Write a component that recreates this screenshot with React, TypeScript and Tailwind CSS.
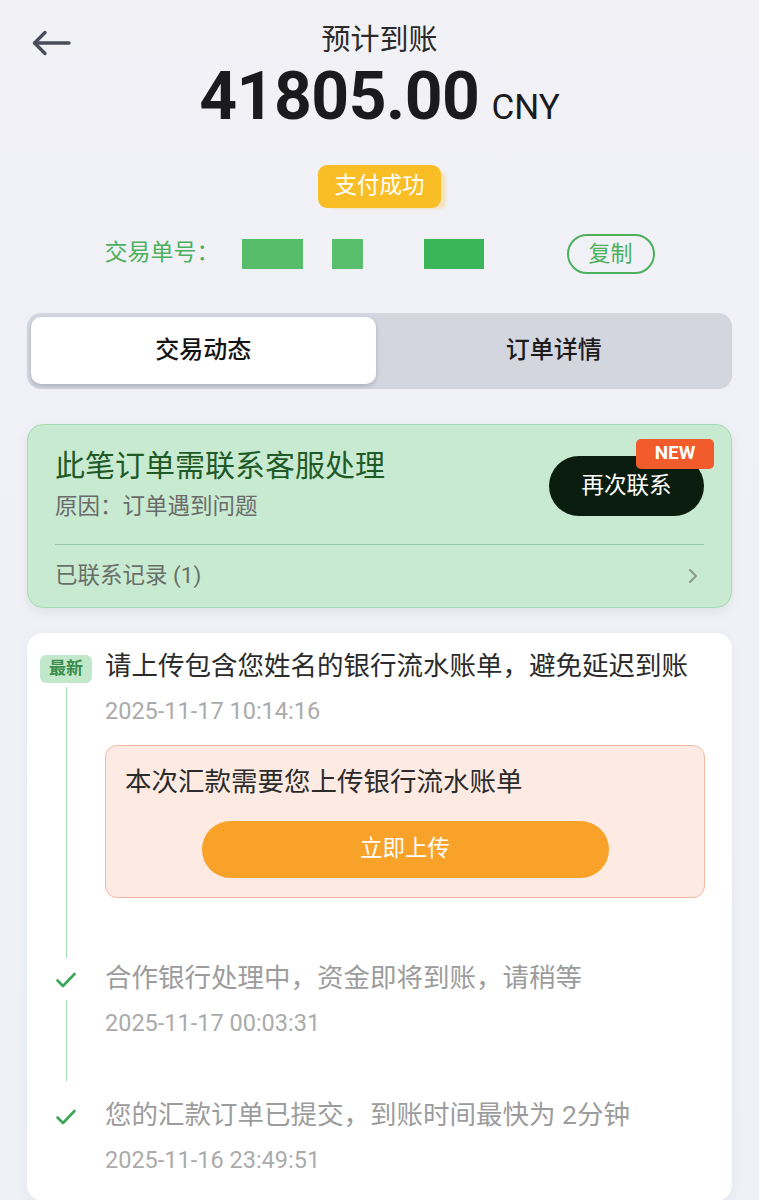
import React from "react";

const BackArrow = () => (
  <svg width="40" height="26" viewBox="0 0 40 26" fill="none" stroke="#4a4c58" strokeWidth="3.4" strokeLinecap="round" strokeLinejoin="round">
    <path d="M38 13H4" />
    <path d="M14 2.5L3.5 13L14 23.5" />
  </svg>
);

const Check = () => (
  <svg width="22" height="18" viewBox="0 0 22 18" fill="none" stroke="#3aa757" strokeWidth="2.6" strokeLinecap="round" strokeLinejoin="round">
    <path d="M2.5 9.5L8 15L19.5 3" />
  </svg>
);

const Chevron = () => (
  <svg width="10" height="16" viewBox="0 0 10 16" fill="none" stroke="#8b978d" strokeWidth="2" strokeLinecap="round" strokeLinejoin="round">
    <path d="M2 2l6 6-6 6" />
  </svg>
);

export default function App() {
  return (
    <div className="min-h-[1200px] bg-[linear-gradient(to_bottom,#f1f1f6,#f0f1f7_60%,#edf0f6)] px-[27px] pb-[2px] font-['Roboto','Noto_Sans_CJK_SC',sans-serif] overflow-hidden">
      {/* header */}
      <div className="grid grid-cols-[1fr_auto_1fr] items-center pt-[20px]">
        <div className="pl-[4px] pt-[6px]">
          <BackArrow />
        </div>
        <div className="text-[29px] leading-[40px] text-[#2a2a2a]">预计到账</div>
        <div />
      </div>
      <div className="mt-[4px] flex items-baseline justify-center">
        <span className="text-[66px] leading-[66px] font-bold tracking-[-0.5px] text-[#1b1b1d]">41805.00</span>
        <span className="ml-[12px] text-[35px] text-[#1b1b1d]">CNY</span>
      </div>
      <div className="mt-[30px] flex justify-center">
        <div className="h-[43px] w-[123px] rounded-[9px] bg-[#f9bd26] flex items-center justify-center text-[22.5px] text-white shadow-[8px_4px_3px_-3px_rgba(249,200,90,0.35)]">
          支付成功
        </div>
      </div>

      {/* transaction number */}
      <div className="mx-auto mt-[26px] flex h-[40px] w-[550px] items-center">
        <span className="text-[23px] text-[#4cb05c]">交易单号：</span>
        <div className="ml-[22px] h-[30px] w-[61px] bg-[#57bd6b]" />
        <div className="ml-[29px] h-[30px] w-[31px] bg-[#5abf6d]" />
        <div className="ml-[61px] h-[30px] w-[60px] bg-[#3bb557]" />
        <button className="ml-auto h-[40px] w-[88px] rounded-full border-2 border-[#4cb05c] text-[22px] text-[#4cb05c]">复制</button>
      </div>

      {/* tabs */}
      <div className="mt-[39px] grid h-[74px] grid-cols-2 rounded-[14px] bg-[#d3d5df] p-[4px] pb-[3px] shadow-[0_2px_1px_rgba(150,152,165,0.35)]">
        <div className="flex items-center justify-center rounded-[10px] bg-white text-[24px] font-medium text-[#141414] shadow-[0_2px_4px_rgba(0,0,0,0.18)] mr-[4px]">
          交易动态
        </div>
        <div className="flex items-center justify-center text-[24px] font-medium text-[#1c1c1c]">订单详情</div>
      </div>

      {/* contact card */}
      <div className="mt-[37px] rounded-[16px] border border-[#a9d9b4] bg-[#c8ead0] px-[27px] pt-[21px] pb-[15px] shadow-[0_4px_10px_rgba(120,140,130,0.15)]">
        <div className="flex items-center justify-between">
          <div>
            <div className="text-[30px] leading-[40px] text-[#1f5a28]">此笔订单需联系客服处理</div>
            <div className="mt-[4px] text-[22.5px] leading-[32px] text-[#6b6b6b]">原因：订单遇到问题</div>
          </div>
          <div className="relative mt-[4px]">
            <button className="h-[60px] w-[155px] rounded-full bg-[#0b1d0f] text-[22.5px] text-white">再次联系</button>
            <span className="absolute right-[-10px] top-[-17px] flex h-[30px] w-[78px] items-center justify-center rounded-[5px] bg-[#f25b2b] text-[19px] font-bold text-white">
              NEW
            </span>
          </div>
        </div>
        <div className="mt-[22px] h-px bg-[#9ccaa6]" />
        <div className="mt-[15px] flex h-[32px] items-center justify-between">
          <span className="text-[22.5px] text-[#68706a]">已联系记录 (1)</span>
          <span className="pr-[6px]"><Chevron /></span>
        </div>
      </div>

      {/* timeline card */}
      <div className="mt-[25px] rounded-[16px] bg-white pl-[13px] pr-[27px] pt-[15px] pb-[25px] shadow-[0_2px_10px_rgba(120,130,150,0.08)]">
        {/* item 1 */}
        <div className="flex">
          <div className="flex w-[52px] flex-col items-center">
            <span className="mt-[7px] flex h-[28px] w-[52px] items-center justify-center rounded-[6px] bg-[#c2e8cb] text-[17px] font-bold text-[#3b8d4b]">
              最新
            </span>
            <div className="mt-[4px] mb-[2px] w-px flex-1 bg-[#a8dcb1]" />
          </div>
          <div className="ml-[13px] flex-1 pb-[62px]">
            <div className="text-[26.5px] leading-[36px] text-[#2b2b2b] whitespace-nowrap">请上传包含您姓名的银行流水账单，避免延迟到账</div>
            <div className="mt-[11px] text-[23.5px] leading-[32px] text-[#ababab]">2025-11-17 10:14:16</div>
            <div className="mt-[18px] rounded-[12px] border border-[#f2b9a0] bg-[#fdebe3] px-[19px] pt-[18px] pb-[19px]">
              <div className="text-[26.5px] leading-[36px] text-[#2b2b2b]">本次汇款需要您上传银行流水账单</div>
              <div className="mt-[21px] flex justify-center">
                <button className="h-[57px] w-[407px] rounded-full bg-[#f9a22a] text-[22.5px] text-white">立即上传</button>
              </div>
            </div>
          </div>
        </div>

        {/* item 2 */}
        <div className="flex">
          <div className="flex w-[52px] flex-col items-center">
            <div className="mt-[11px]"><Check /></div>
            <div className="mt-[11px] mb-[16px] w-px flex-1 bg-[#a8dcb1]" />
          </div>
          <div className="ml-[13px] flex-1 pb-[58px]">
            <div className="text-[26.5px] leading-[36px] text-[#9c9c9c]">合作银行处理中，资金即将到账，请稍等</div>
            <div className="mt-[11px] text-[23.5px] leading-[32px] text-[#ababab]">2025-11-17 00:03:31</div>
          </div>
        </div>

        {/* item 3 */}
        <div className="flex">
          <div className="flex w-[52px] flex-col items-center">
            <div className="mt-[11px]"><Check /></div>
          </div>
          <div className="ml-[13px] flex-1">
            <div className="text-[26.5px] leading-[36px] text-[#9c9c9c]">您的汇款订单已提交，到账时间最快为 2分钟</div>
            <div className="mt-[11px] text-[23.5px] leading-[32px] text-[#ababab]">2025-11-16 23:49:51</div>
          </div>
        </div>
      </div>
    </div>
  );
}
